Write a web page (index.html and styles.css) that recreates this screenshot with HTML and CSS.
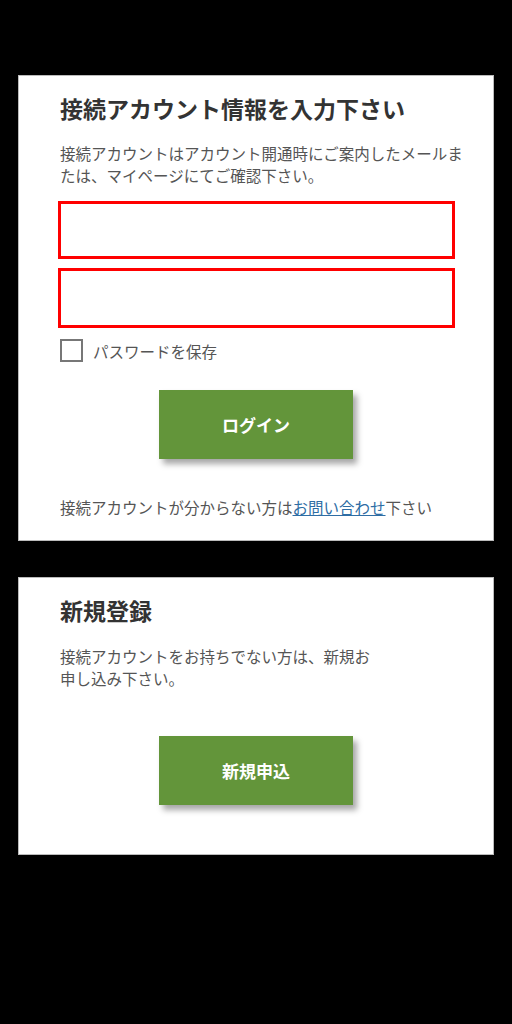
FILE: index.html
```html
<!DOCTYPE html>
<html lang="ja">
<head>
    <meta charset="UTF-8">
    <meta name="viewport" content="width=device-width, initial-scale=1.0">
    <title>ログイン</title>
    <link rel="stylesheet" href="styles.css">
</head>
<body>
    <div class="page">
        <section class="card">
            <h2 class="card-title">接続アカウント情報を入力下さい</h2>
            <p class="card-text">接続アカウントはアカウント開通時にご案内したメールまたは、マイページにてご確認下さい。</p>
            <form id="loginForm" class="login-form">
                <input type="text" class="field" name="account">
                <input type="password" class="field" name="password">
                <label class="remember">
                    <input type="checkbox" name="remember">
                    <span class="box"></span>
                    <span>パスワードを保存</span>
                </label>
                <button type="submit" class="btn">ログイン</button>
            </form>
            <p class="card-text help">接続アカウントが分からない方は<a href="#">お問い合わせ</a>下さい</p>
        </section>

        <section class="card card-new">
            <h2 class="card-title">新規登録</h2>
            <p class="card-text narrow">接続アカウントをお持ちでない方は、新規お申し込み下さい。</p>
            <button type="button" class="btn">新規申込</button>
        </section>
    </div>
</body>
</html>
```

FILE: styles.css
```css
body {
    margin: 0;
    background: #000;
    font-family: "Noto Sans CJK JP", "Noto Sans", sans-serif;
    color: #555;
}
.page {
    padding: 75px 18px 0;
    display: flex;
    flex-direction: column;
    gap: 36px;
}
.card {
    background: #fff;
    border: 1px solid #bbb;
    padding: 17px 23px 22px 41px;
    display: flex;
    flex-direction: column;
}
.card-title {
    margin: 0;
    font-size: 23px;
    line-height: 30px;
    font-weight: bold;
    color: #333;
}
.card-text {
    margin: 19px 0 0;
    font-size: 15.5px;
    line-height: 22px;
    color: #555;
}
.card-text.narrow {
    max-width: 320px;
    margin-top: 20px;
}
.login-form {
    display: flex;
    flex-direction: column;
    margin-top: 15px;
}
.field {
    width: 397px;
    height: 58px;
    margin-left: -2px;
    border: 3px solid #f00;
    box-sizing: border-box;
    outline: none;
    padding: 0 12px;
    font-size: 16px;
}
.field + .field {
    margin-top: 9px;
    height: 60px;
}
.remember {
    display: flex;
    align-items: center;
    gap: 10px;
    margin-top: 11px;
    font-size: 15.5px;
    color: #555;
}
.remember input {
    display: none;
}
.box {
    width: 23px;
    height: 23px;
    border: 2px solid #777;
    box-sizing: border-box;
}
.btn {
    align-self: center;
    margin: 28px 0 0 -18px;
    width: 194px;
    height: 69px;
    border: none;
    background: #63953a;
    color: #fff;
    font-family: inherit;
    font-size: 17px;
    font-weight: bold;
    box-shadow: 4px 5px 6px rgba(0, 0, 0, 0.35);
    cursor: pointer;
}
.help {
    margin-top: 37px;
}
.help a {
    color: #2e6da4;
    text-decoration: underline;
}
.card-new {
    padding-bottom: 49px;
}
.card-new .btn {
    margin-top: 47px;
}
```
